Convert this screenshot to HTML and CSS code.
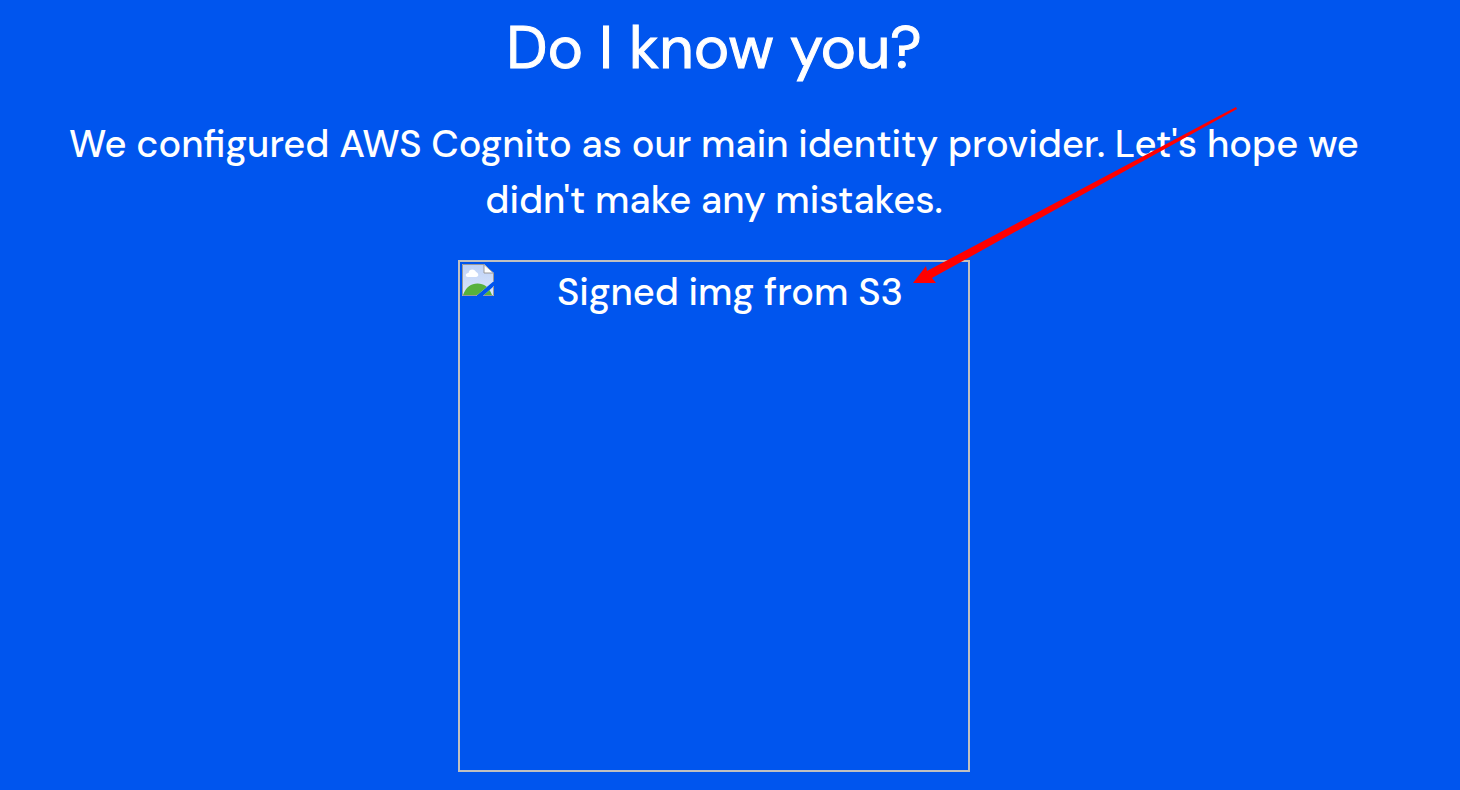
FILE: index.html
```html
<!DOCTYPE html>
<html lang="en">
<head>
<meta charset="utf-8">
<title>Do I know you?</title>
<link rel="stylesheet" href="styles.css">
</head>
<body>
<main class="page">
  <h1 class="title">Do I know you?</h1>
  <p class="lead">We configured AWS Cognito as our main identity provider. Let's hope we didn't make any mistakes.</p>
  <figure class="picture">
    <svg class="broken-icon" viewBox="0 0 32 32" aria-hidden="true">
      <defs>
        <linearGradient id="sky" x1="0" y1="0" x2="0" y2="1">
          <stop offset="0" stop-color="#bdd1f6"/>
          <stop offset="1" stop-color="#dbe6fb"/>
        </linearGradient>
        <clipPath id="torn"><path d="M0 0H22L32 9V17L14 32H0ZM21 32L32 22V32Z"/></clipPath>
      </defs>
      <g clip-path="url(#torn)">
        <path d="M0 0H22L32 9V32H0Z" fill="url(#sky)"/>
        <path d="M1 31C4 23 9 19.500 15.500 19.500C22 19.500 27 23 30 31Z" fill="#57b13c"/>
        <path d="M6 13C3 13 3 9 6.500 9C7 4.500 13 4.500 14 8C17 9 17 13 14 13Z" fill="#fff"/>
        <path d="M22 0V9H32Z" fill="#fff"/>
        <path d="M.5 .5H22L31.500 9V31.500H.5ZM22 1V9H31" fill="none" stroke="#999"/>
      </g>
    </svg>
    <figcaption class="alt">Signed img from S3</figcaption>
    <svg class="arrow" viewBox="0 0 330 184" aria-hidden="true">
      <path d="M323 1L14 165L13 160L0 177L23 177L19 172L324 3Z" fill="#f00"/>
    </svg>
  </figure>
</main>
</body>
</html>
```
FILE: styles.css
```css
body {
  margin: 0;
  background: #0055ee;
  color: #fff;
  font-family: "DM Sans", Lato, sans-serif;
  font-weight: 500;
}
.page {
  padding: 8px 60px 18px 28px;
  text-align: center;
}
.title {
  margin: 0 0 28px;
  font-size: 60px;
  line-height: 80px;
  font-weight: 400;
  -webkit-text-stroke: 1px #fff;
}
.lead {
  margin: 0 0 32px;
  font-size: 38px;
  line-height: 56px;
}
.picture {
  position: relative;
  box-sizing: border-box;
  display: flex;
  width: 512px;
  height: 512px;
  margin: 0 auto;
  padding: 2px;
  border: 2px solid #c0c0c0;
}
.broken-icon {
  width: 32px;
  height: 32px;
}
.alt {
  flex: 1;
  font-size: 38px;
  line-height: 56px;
}
.arrow {
  position: absolute;
  left: 453px;
  top: -156px;
  width: 330px;
  height: 184px;
}
```
